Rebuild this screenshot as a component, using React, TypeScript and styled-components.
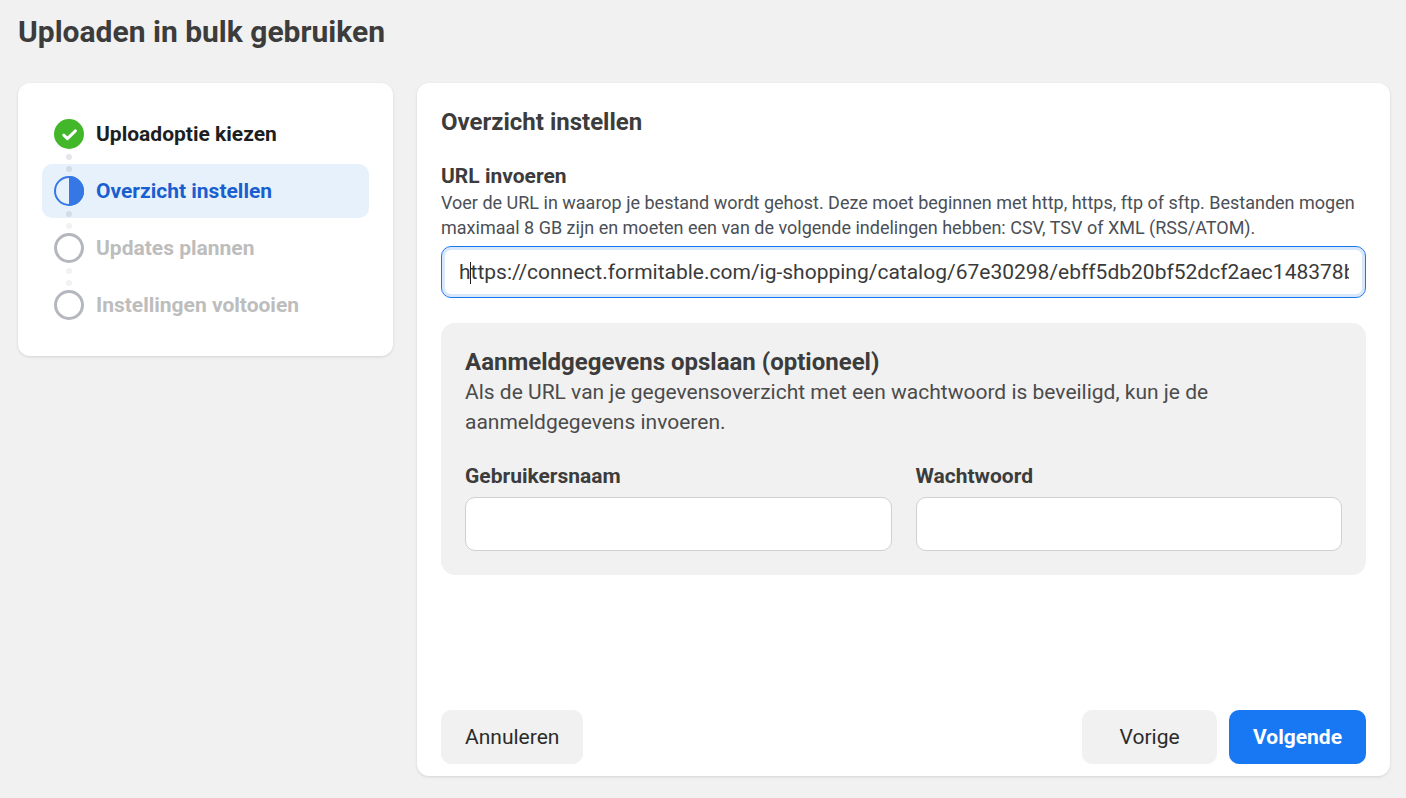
import React from 'react';
import styled, { createGlobalStyle, css } from 'styled-components';

type StepState = 'done' | 'active' | 'pending';

const steps: { label: string; state: StepState }[] = [
    { label: 'Uploadoptie kiezen', state: 'done' },
    { label: 'Overzicht instellen', state: 'active' },
    { label: 'Updates plannen', state: 'pending' },
    { label: 'Instellingen voltooien', state: 'pending' },
];

const StepIcon = ({ state }: { state: StepState }) => {
    if (state === 'done') {
        return (
            <svg width="30" height="30" viewBox="0 0 30 30">
                <circle cx="15" cy="15" r="15" fill="#42b72a" />
                <path d="M9.8 16.1l3.6 3.5 8-7.7" fill="none" stroke="#fff" strokeWidth="3" strokeLinecap="round" strokeLinejoin="round" />
            </svg>
        );
    }
    if (state === 'active') {
        return (
            <svg width="30" height="30" viewBox="0 0 30 30">
                <circle cx="15" cy="15" r="14" fill="none" stroke="#3578e5" strokeWidth="2" />
                <path d="M15 0a15 15 0 0 1 0 30z" fill="#3578e5" />
            </svg>
        );
    }
    return (
        <svg width="30" height="30" viewBox="0 0 30 30">
            <circle cx="15" cy="15" r="13.5" fill="none" stroke="#b4b7bd" strokeWidth="3" />
        </svg>
    );
};

export default function App() {
    return (
        <>
            <GlobalStyle />
            <Page>
                <PageTitle>Uploaden in bulk gebruiken</PageTitle>
                <Columns>
                    <StepsCard>
                        {steps.map((step, index) => (
                            <StepRow key={step.label} $state={step.state}>
                                {index > 0 && <TopDot $state={step.state} />}
                                <StepIcon state={step.state} />
                                <StepLabel $state={step.state}>{step.label}</StepLabel>
                                {index < steps.length - 1 && <BottomDot $state={step.state} />}
                            </StepRow>
                        ))}
                    </StepsCard>
                    <MainCard>
                        <CardTitle>Overzicht instellen</CardTitle>
                        <UrlLabel>URL invoeren</UrlLabel>
                        <HelpText>
                            Voer de URL in waarop je bestand wordt gehost. Deze moet beginnen met http, https, ftp of sftp. Bestanden mogen
                            maximaal 8 GB zijn en moeten een van de volgende indelingen hebben: CSV, TSV of XML (RSS/ATOM).
                        </HelpText>
                        <UrlField>
                            <UrlInput
                                readOnly
                                value="https://connect.formitable.com/ig-shopping/catalog/67e30298/ebff5db20bf52dcf2aec148378b1f0c2"
                            />
                            <Caret />
                        </UrlField>
                        <CredentialsPanel>
                            <PanelTitle>Aanmeldgegevens opslaan (optioneel)</PanelTitle>
                            <PanelText>
                                Als de URL van je gegevensoverzicht met een wachtwoord is beveiligd, kun je de aanmeldgegevens invoeren.
                            </PanelText>
                            <CredentialsGrid>
                                <div>
                                    <FieldLabel>Gebruikersnaam</FieldLabel>
                                    <TextInput />
                                </div>
                                <div>
                                    <FieldLabel>Wachtwoord</FieldLabel>
                                    <TextInput type="password" />
                                </div>
                            </CredentialsGrid>
                        </CredentialsPanel>
                        <Footer>
                            <Button>Annuleren</Button>
                            <FooterRight>
                                <Button>Vorige</Button>
                                <Button $primary>Volgende</Button>
                            </FooterRight>
                        </Footer>
                    </MainCard>
                </Columns>
            </Page>
        </>
    );
}

const GlobalStyle = createGlobalStyle`
  html, body {
    margin: 0;
    padding: 0;
    background: #f1f1f1;
    font-family: Roboto, "Liberation Sans", sans-serif;
    color: #3a3a3a;
  }
  * {
    box-sizing: border-box;
  }
`;

const Page = styled.div`
  width: 1406px;
  height: 798px;
  padding: 15px 16px 22px 18px;
  display: flex;
  flex-direction: column;
  overflow: hidden;
`;

const PageTitle = styled.h1`
  margin: 0 0 33px;
  height: 35px;
  font-size: 30px;
  line-height: 33px;
  font-weight: 700;
  color: #3c3c3c;
`;

const Columns = styled.div`
  flex: 1;
  display: flex;
  align-items: flex-start;
  gap: 24px;
  min-height: 0;
`;

const Card = styled.div`
  background: #fff;
  border-radius: 12px;
  box-shadow: 0 1px 3px rgba(0, 0, 0, 0.12);
`;

const StepsCard = styled(Card)`
  width: 375px;
  padding: 24px;
  display: flex;
  flex-direction: column;
  gap: 3px;
`;

const StepRow = styled.div<{ $state: StepState }>`
  position: relative;
  height: 54px;
  padding: 0 12px;
  display: flex;
  align-items: center;
  gap: 12px;
  border-radius: 10px;
  background: ${p => (p.$state === 'active' ? '#e7f1fc' : 'transparent')};

  svg {
    flex: none;
  }
`;

const dot = css<{ $state: StepState }>`
  position: absolute;
  left: 24px;
  width: 6px;
  height: 6px;
  border-radius: 50%;
  background: ${p => (p.$state === 'active' ? '#d3dbe7' : p.$state === 'done' ? '#e4e6eb' : '#f1f2f4')};
`;

const TopDot = styled.span<{ $state: StepState }>`
  ${dot};
  top: 2px;
`;

const BottomDot = styled.span<{ $state: StepState }>`
  ${dot};
  bottom: 1px;
`;

const StepLabel = styled.span<{ $state: StepState }>`
  font-size: 21px;
  font-weight: 700;
  color: ${p => (p.$state === 'done' ? '#1c1e21' : p.$state === 'active' ? '#1a5fd0' : '#bdbdbd')};
`;

const MainCard = styled(Card)`
  flex: 1;
  align-self: stretch;
  padding: 24px 24px 12px;
  display: flex;
  flex-direction: column;
`;

const CardTitle = styled.h2`
  margin: 0 0 27px;
  height: 30px;
  font-size: 24px;
  line-height: 30px;
  font-weight: 700;
  color: #3c3c3c;
`;

const UrlLabel = styled.div`
  font-size: 21px;
  line-height: 24px;
  height: 26px;
  font-weight: 700;
  color: #3c3c3c;
`;

const HelpText = styled.p`
  margin: 0 0 6px;
  font-size: 18px;
  line-height: 25px;
  color: #4b4f56;
`;

const UrlField = styled.div`
  position: relative;
  height: 52px;
  flex: none;
`;

const UrlInput = styled.input`
  width: 100%;
  height: 100%;
  padding: 0 16px 0 17px;
  border: 1px solid #1877f2;
  border-radius: 10px;
  box-shadow: inset 0 0 0 3px #d9e7fb;
  outline: none;
  font-family: inherit;
  font-size: 21px;
  color: #3a3a3a;
  background: #fff;
`;

const Caret = styled.span`
  position: absolute;
  left: 29px;
  top: 16px;
  width: 1px;
  height: 22px;
  background: #1c1e21;
`;

const CredentialsPanel = styled.div`
  margin-top: 25px;
  height: 252px;
  flex: none;
  padding: 24px;
  background: #f1f1f1;
  border-radius: 14px;
`;

const PanelTitle = styled.h3`
  margin: 0;
  font-size: 24px;
  line-height: 30px;
  font-weight: 700;
  color: #3c3c3c;
`;

const PanelText = styled.p`
  margin: 0 0 24px;
  font-size: 21px;
  line-height: 30px;
  color: #4b4b4b;
`;

const CredentialsGrid = styled.div`
  display: grid;
  grid-template-columns: 1fr 1fr;
  gap: 24px;
`;

const FieldLabel = styled.div`
  height: 36px;
  font-size: 21px;
  line-height: 30px;
  font-weight: 700;
  color: #3c3c3c;
`;

const TextInput = styled.input`
  display: block;
  width: 100%;
  height: 54px;
  border: 1px solid #ced0d4;
  border-radius: 10px;
  background: #fff;
  outline: none;
`;

const Footer = styled.div`
  margin-top: auto;
  display: flex;
  justify-content: space-between;
`;

const FooterRight = styled.div`
  display: flex;
  gap: 12px;
`;

const Button = styled.button<{ $primary?: boolean }>`
  height: 54px;
  min-width: 135px;
  padding: 0 24px;
  border: none;
  border-radius: 10px;
  font-family: inherit;
  font-size: 21px;
  font-weight: ${p => (p.$primary ? 700 : 400)};
  color: ${p => (p.$primary ? '#fff' : '#2b2b2b')};
  background: ${p => (p.$primary ? '#1877f2' : '#f1f1f1')};
`;
